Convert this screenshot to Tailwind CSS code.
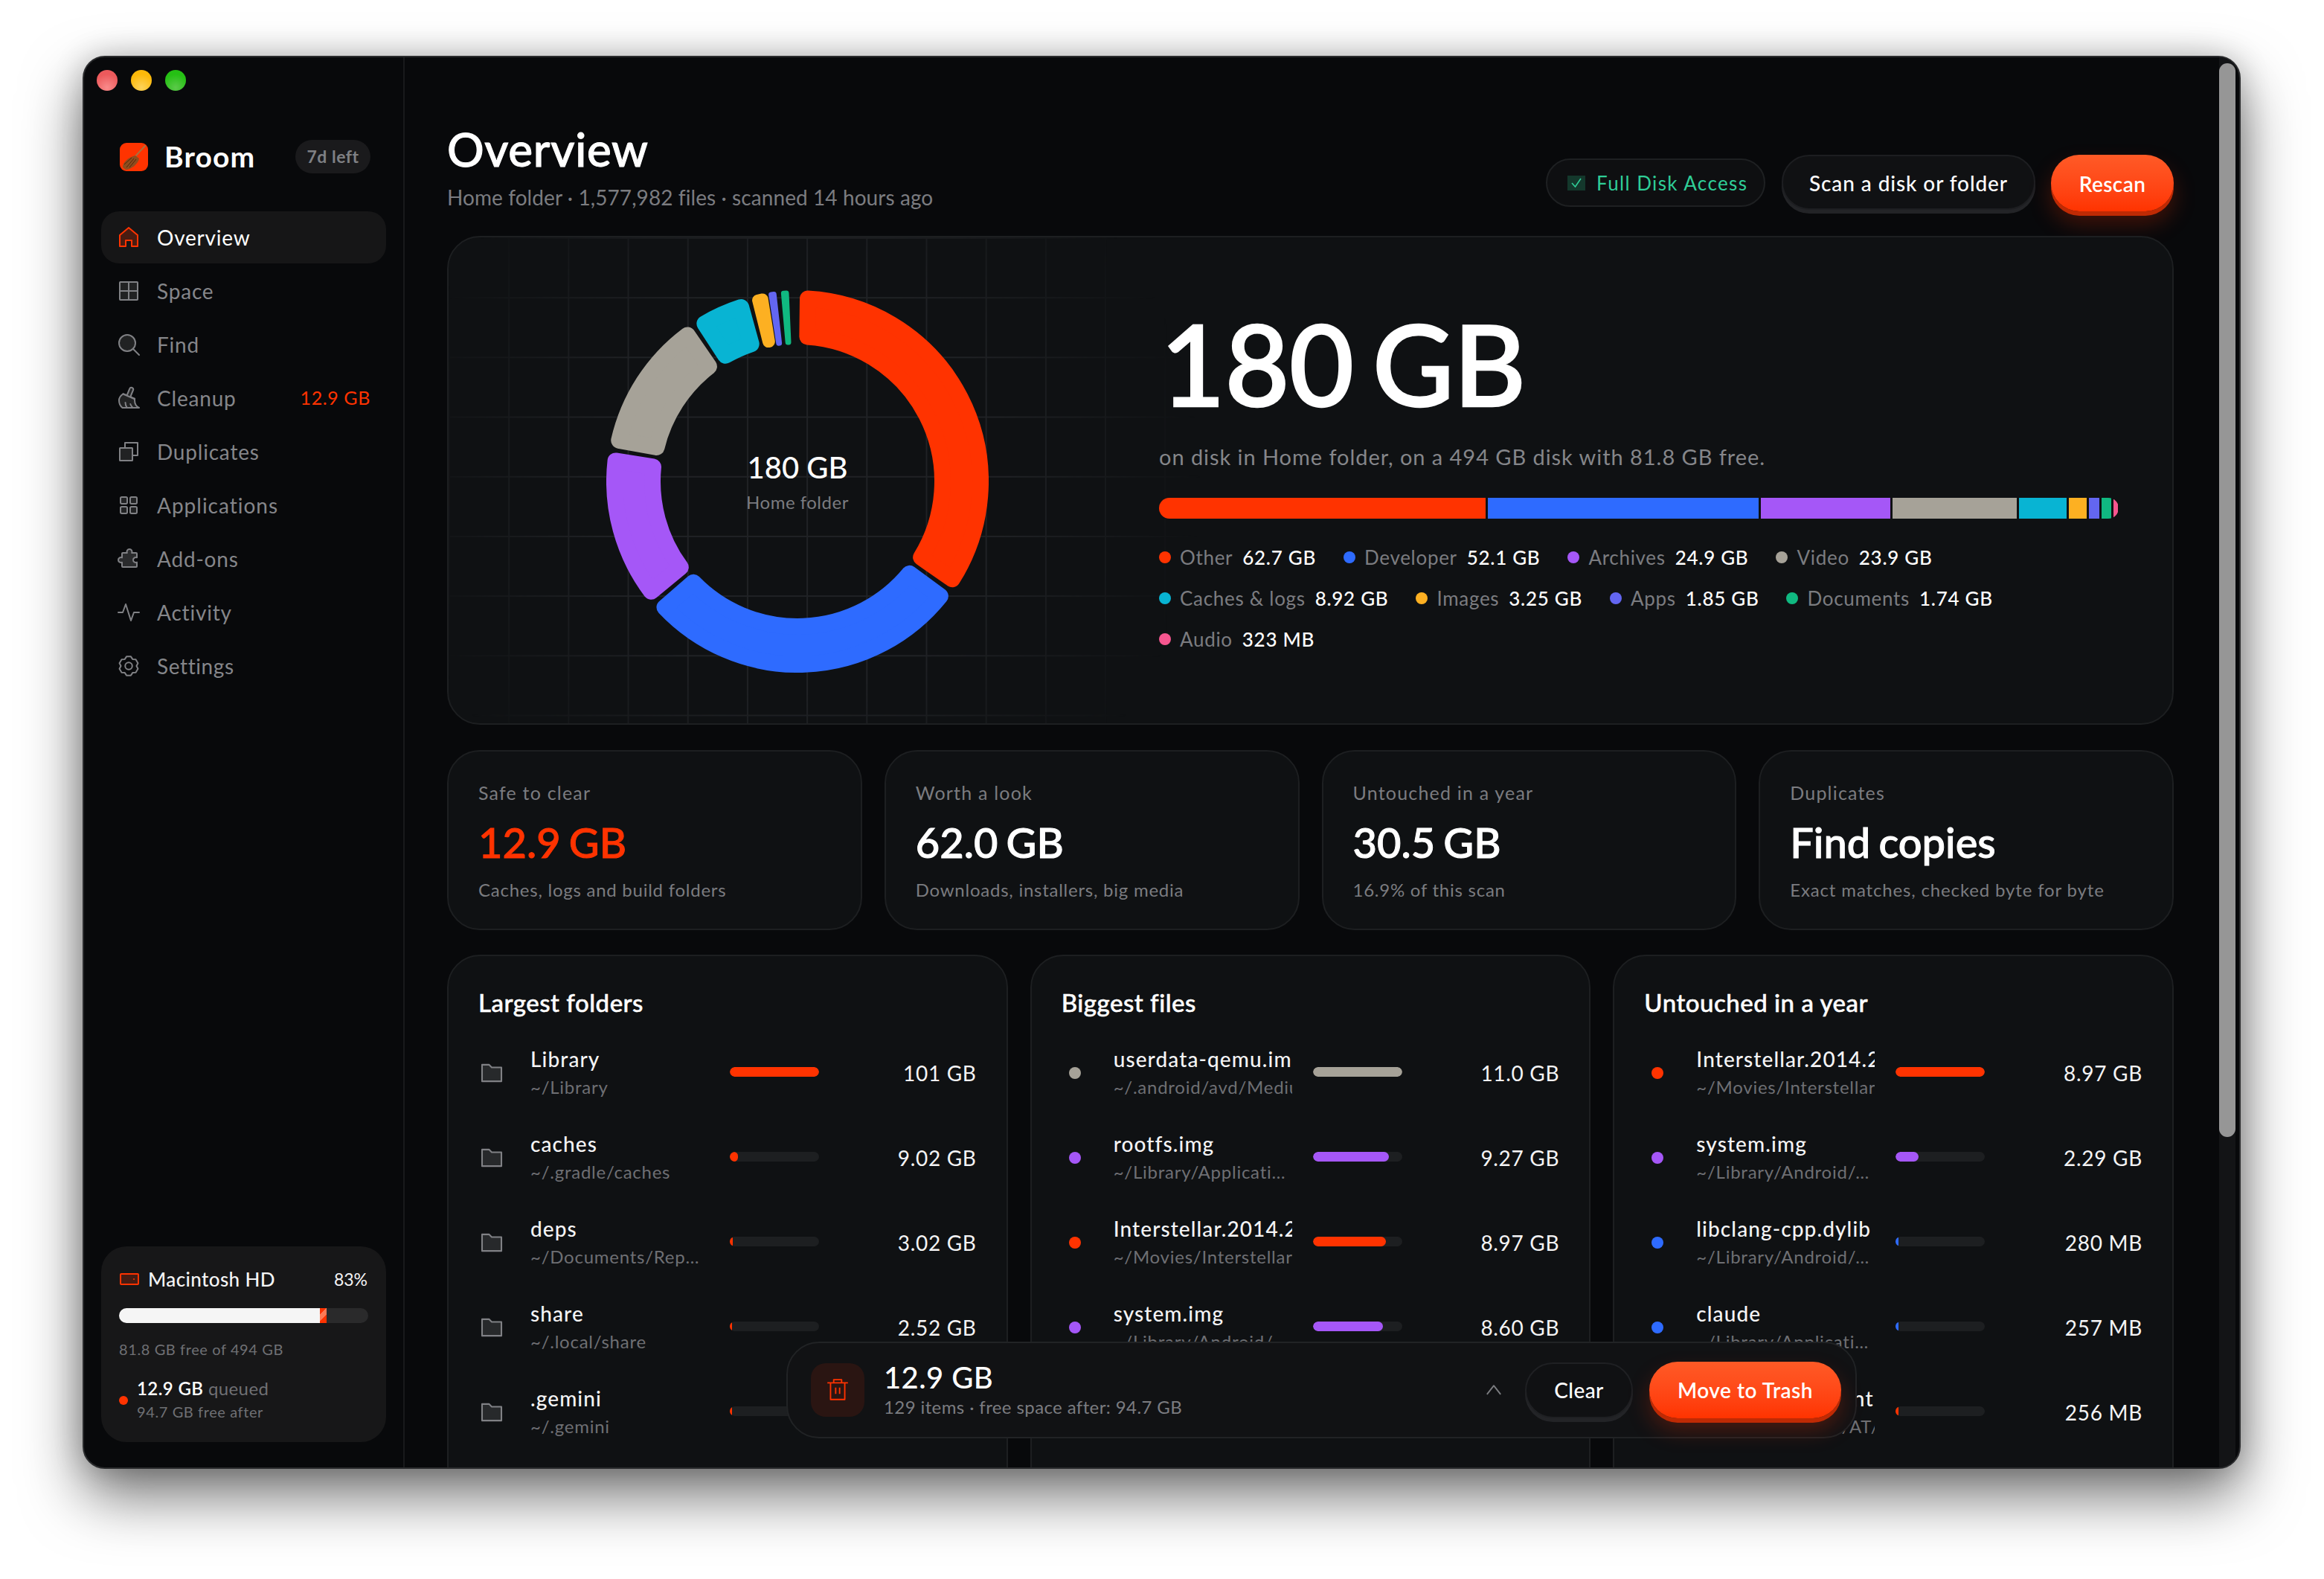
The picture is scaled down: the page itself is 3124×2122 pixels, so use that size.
<!DOCTYPE html>
<html lang="en">
<head>
  <meta charset="UTF-8" />
  <title>Broom - Overview</title>
  <script src="https://cdn.jsdelivr.net/npm/@tailwindcss/browser@4"></script>
</head>
<body class="bg-white w-[3124px] h-[2122px] pt-[75px] pl-[111px] overflow-hidden [font-family:Lato,sans-serif] text-[#f4f4f5]">
  <div class="relative flex w-[2901px] h-[1899px] rounded-[30px] overflow-hidden bg-[#08090b] border-2 border-[#2a2b2d] shadow-[0_36px_80px_rgba(0,0,0,0.55),0_0_40px_rgba(0,0,0,0.2)]">

    <!-- sidebar -->
    <aside class="w-[431px] shrink-0 h-full flex flex-col border-r-2 border-[#18191b] px-[23px]">
      <div class="flex gap-[18px] -ml-[6px] mt-[17px]">
        <span class="w-[28px] h-[28px] rounded-full bg-[radial-gradient(circle_at_50%_85%,#f98b8b,#ec5a5c_65%)]"></span>
        <span class="w-[28px] h-[28px] rounded-full bg-[radial-gradient(circle_at_50%_85%,#fdd35a,#fdb90a_65%)]"></span>
        <span class="w-[28px] h-[28px] rounded-full bg-[radial-gradient(circle_at_50%_85%,#5cc94a,#25c014_65%)]"></span>
      </div>
      <div class="flex items-center h-[45px] mt-[66px] pl-[25px] pr-[21px]">
        <svg class="w-[38px] h-[38px] rounded-[9px] bg-[#ff3300] shrink-0" viewBox="0 0 38 38">
          <path d="M34 4 L19 20" stroke="#a8703e" stroke-width="2" stroke-linecap="round" />
          <path d="M4 33 C3 27 12 19 21 17 L26 21 C25 28 15 36 8 36 Z" fill="#8f4d1e" />
          <path d="M9 33 L19 21 M13 33 L22 22 M6 29 L16 20" stroke="#4f270e" stroke-width="1" />
        </svg>
        <span class="ml-[22px] text-[39px] leading-none font-bold text-white tracking-[1.1px]">Broom</span>
        <span class="ml-auto h-[45px] w-[101px] rounded-full bg-[#1a1a1c] flex items-center justify-center text-[23px] font-bold text-[#7f8084] tracking-[0.5px]">7d left</span>
      </div>

      <nav class="mt-[51px] flex flex-col gap-[2px]">
        <a class="h-[70px] rounded-[24px] bg-[#161617] flex items-center pl-[21px] pr-[21px] gap-[22px] text-[28px] text-white tracking-[0.8px]">
          <svg class="w-[32px] h-[32px]" viewBox="0 0 256 256" fill="#ff3300" fill-opacity=".22" stroke="#ff3300" stroke-width="16" stroke-linejoin="round"><path d="M160 224V160H96V224H32V104L128 24L224 104V224Z" /></svg>
          Overview
        </a>
        <a class="h-[70px] rounded-[24px] flex items-center pl-[21px] pr-[21px] gap-[22px] text-[28px] text-[#85868a] tracking-[0.8px]">
          <svg class="w-[32px] h-[32px]" viewBox="0 0 256 256" fill="none" stroke="#808185" stroke-width="16"><rect x="32" y="32" width="192" height="192" rx="6" fill="#fff" fill-opacity=".1" /><path d="M128 32V224M32 128H224" /></svg>
          Space
        </a>
        <a class="h-[70px] rounded-[24px] flex items-center pl-[21px] pr-[21px] gap-[22px] text-[28px] text-[#85868a] tracking-[0.8px]">
          <svg class="w-[32px] h-[32px]" viewBox="0 0 256 256" fill="none" stroke="#808185" stroke-width="16" stroke-linecap="round"><circle cx="112" cy="112" r="88" fill="#fff" fill-opacity=".1" /><path d="M174 174L240 240" /></svg>
          Find
        </a>
        <a class="h-[70px] rounded-[24px] flex items-center pl-[21px] pr-[21px] gap-[22px] text-[28px] text-[#85868a] tracking-[0.8px]">
          <svg class="w-[32px] h-[32px]" viewBox="0 0 256 256" fill="none" stroke="#808185" stroke-width="16" stroke-linejoin="round" stroke-linecap="round"><path d="M240 232C206 216 192 186 192 152V134L158 120A14 14 0 0 1 151 102L176 42A20 20 0 0 0 138 28L114 86A14 14 0 0 1 96 93L68 82C38 104 24 126 24 152C24 184 36 212 60 232Z" fill="#fff" fill-opacity=".1" /><path d="M68 84L192 138M110 232C98 214 92 196 92 176M172 232C160 220 152 208 146 192" /></svg>
          Cleanup
          <span class="ml-auto text-[25px] text-[#ff3300] tracking-[0.6px]">12.9 GB</span>
        </a>
        <a class="h-[70px] rounded-[24px] flex items-center pl-[21px] pr-[21px] gap-[22px] text-[28px] text-[#85868a] tracking-[0.8px]">
          <svg class="w-[32px] h-[32px]" viewBox="0 0 256 256" fill="none" stroke="#808185" stroke-width="16" stroke-linejoin="round"><rect x="32" y="88" width="136" height="136" rx="4" fill="#fff" fill-opacity=".1" /><path d="M88 88V32H224V168H168" /></svg>
          Duplicates
        </a>
        <a class="h-[70px] rounded-[24px] flex items-center pl-[21px] pr-[21px] gap-[22px] text-[28px] text-[#85868a] tracking-[1px]">
          <svg class="w-[32px] h-[32px]" viewBox="0 0 256 256" fill="#fff" fill-opacity=".1" stroke="#808185" stroke-width="16"><rect x="40" y="40" width="72" height="72" rx="14" /><rect x="144" y="40" width="72" height="72" rx="14" /><rect x="40" y="144" width="72" height="72" rx="14" /><rect x="144" y="144" width="72" height="72" rx="14" /></svg>
          Applications
        </a>
        <a class="h-[70px] rounded-[24px] flex items-center pl-[21px] pr-[21px] gap-[22px] text-[28px] text-[#85868a] tracking-[0.8px]">
          <svg class="w-[32px] h-[32px]" viewBox="0 0 256 256" fill="#fff" fill-opacity=".14" stroke="#808185" stroke-width="16" stroke-linejoin="round"><path d="M64 216a8 8 0 0 1-8-8V165.3a28 28 0 1 1 0-50.6V72a8 8 0 0 1 8-8h46.7a28 28 0 1 1 50.6 0H208a8 8 0 0 1 8 8v42.7a28 28 0 1 0 0 50.6V208a8 8 0 0 1-8 8Z" /></svg>
          Add-ons
        </a>
        <a class="h-[70px] rounded-[24px] flex items-center pl-[21px] pr-[21px] gap-[22px] text-[28px] text-[#85868a] tracking-[0.8px]">
          <svg class="w-[32px] h-[32px]" viewBox="0 0 256 256" fill="none" stroke="#808185" stroke-width="16" stroke-linejoin="round" stroke-linecap="round"><path d="M16 128H64L96 40L152 216L184 128H240" /></svg>
          Activity
        </a>
        <a class="h-[70px] rounded-[24px] flex items-center pl-[21px] pr-[21px] gap-[22px] text-[28px] text-[#85868a] tracking-[0.6px]">
          <svg class="w-[32px] h-[32px]" viewBox="0 0 256 256" fill="none" stroke="#808185" stroke-width="16" stroke-linejoin="round"><path d="M104.6 26.7H151.4L170 55.3L204 57.1L227.5 97.6L212 128L227.5 158.4L204 198.9L170 200.7L151.4 229.3H104.6L86 200.7L52 198.9L28.5 158.4L44 128L28.5 97.6L52 57.1L86 55.3Z" /><circle cx="128" cy="128" r="38" /></svg>
          Settings
        </a>
      </nav>

      <div class="mt-auto mb-[34px] h-[263px] rounded-[34px] bg-[#171718] px-[24px] pt-[28px]">
        <div class="flex items-center h-[32px]">
          <svg class="w-[26px] h-[16px] ml-[1px]" viewBox="0 0 26 16" fill="#ff3300" fill-opacity=".2" stroke="#ff3300" stroke-width="2"><rect x="1" y="1" width="24" height="14" rx="1" /><circle cx="19" cy="8" r="1" fill="#ff3300" fill-opacity="1" stroke="none" /></svg>
          <span class="ml-[12px] text-[26px] font-medium tracking-[0.4px]">Macintosh HD</span>
          <span class="ml-auto text-[23px] mr-[1px]">83%</span>
        </div>
        <div class="mt-[23px] h-[20px] w-[335px] rounded-full bg-[#2a2a2b] overflow-hidden flex">
          <div class="w-[270px] bg-[#f5f5f5]"></div>
          <div class="w-[9px] bg-[linear-gradient(135deg,#ff3300_30%,#ff7a55_30%,#ff7a55_62%,#ff3300_62%)]"></div>
        </div>
        <div class="mt-[21px] text-[20px] leading-[28px] text-[#6f7074] tracking-[0.6px]">81.8 GB free of 494 GB</div>
        <div class="mt-[24px] flex items-start">
          <span class="w-[12px] h-[12px] rounded-full bg-[#ff3300] mt-[25px]"></span>
          <div class="ml-[12px]">
            <div class="text-[24px] leading-[30px] tracking-[0.4px]"><span class="font-semibold text-white">12.9 GB</span> <span class="text-[#6f7074]">queued</span></div>
            <div class="text-[20px] leading-[26px] mt-[3px] text-[#6f7074] tracking-[0.6px]">94.7 GB free after</div>
          </div>
        </div>
      </div>
    </aside>

    <!-- main -->
    <main class="relative flex-1 min-w-0 h-full overflow-hidden pl-[57px] pr-[88px] pt-[87px]">
      <header class="flex items-start justify-between h-[119px]">
        <div>
          <h1 class="text-[62px] leading-[72px] font-medium text-white tracking-[0.7px] [-webkit-text-stroke:1px_#fff]">Overview</h1>
          <p class="mt-[11px] text-[28px] leading-[36px] text-[#7b7c80] tracking-[0.08px]">Home folder · 1,577,982 files · scanned 14 hours ago</p>
        </div>
        <div class="flex items-start mt-[44px]">
          <div class="mt-[5px] h-[65px] w-[295px] rounded-full border-2 border-[#1e2022] bg-[#0e0f11] flex items-center pl-[27px] gap-[15px] text-[26px] text-[#2fce97] tracking-[1.4px]">
            <svg class="w-[24px] h-[20px] bg-[#14382c]" viewBox="0 0 24 20" fill="none" stroke="#2fce97" stroke-width="1.6"><path d="M6 10L10.5 15L18 4" /></svg>
            <span class="mt-[2px]">Full Disk Access</span>
          </div>
          <button class="ml-[22px] h-[74px] w-[341px] rounded-full border-2 border-[#1d1e21] bg-[#101113] text-[28px] font-medium text-white shadow-[0_5px_0_#232427] tracking-[0.9px] pt-[2px]">Scan a disk or folder</button>
          <button class="ml-[21px] h-[76px] w-[165px] rounded-full bg-linear-to-b from-[#ff5a26] to-[#ff3300] text-[28px] font-semibold text-white shadow-[0_6px_0_#bf2a04,0_16px_30px_rgba(255,51,0,0.25)] tracking-[0.4px] pt-[1px]">Rescan</button>
        </div>
      </header>

      <!-- hero -->
      <section class="relative mt-[34px] h-[657px] rounded-[44px] border-2 border-[#1d1f21] bg-[#0f1113] overflow-hidden flex items-start">
        <div class="absolute inset-0 bg-[linear-gradient(#202225_2px,transparent_2px),linear-gradient(90deg,#202225_2px,transparent_2px)] bg-[size:80.2px_80.2px] [mask-image:radial-gradient(circle_at_471px_330px,#000_15%,transparent_540px)]"></div>
        <div class="relative ml-[212px] mt-[71px] w-[514px] h-[514px] shrink-0">
          <svg id="donut" class="w-[514px] h-[514px]" viewBox="0 0 514 514"></svg>
          <div class="absolute inset-0 flex flex-col items-center justify-center">
            <div class="text-[40px] leading-[46px] font-medium text-white">180 GB</div>
            <div class="mt-[9px] text-[24px] leading-[30px] text-[#7b7c80] tracking-[0.5px]">Home folder</div>
          </div>
        </div>
        <div class="relative ml-[229px] mt-[97px] w-[1300px]">
          <div class="text-[150px] leading-[144px] font-medium text-white ml-[2px] tracking-[-0.5px] [word-spacing:-12px] [-webkit-text-stroke:2.5px_#fff]">180 GB</div>
          <p class="mt-[36px] text-[29px] leading-[36px] text-[#85868a] tracking-[0.95px]">on disk in Home folder, on a 494 GB disk with 81.8 GB free.</p>
          <div class="mt-[37px] flex gap-[3px] w-[1290px] h-[28px] rounded-full overflow-hidden">
            <div class="w-[439px] bg-[#ff3300]"></div>
            <div class="w-[364px] bg-[#2e6bff]"></div>
            <div class="w-[174px] bg-[#a557f7]"></div>
            <div class="w-[167px] bg-[#a6a298]"></div>
            <div class="w-[64px] bg-[#08b4d3]"></div>
            <div class="w-[24px] bg-[#fdb022]"></div>
            <div class="w-[14px] bg-[#6366f1]"></div>
            <div class="w-[13px] bg-[#10b981]"></div>
            <div class="w-[6px] bg-[#f6568f]"></div>
          </div>
          <div class="mt-[34px] flex flex-wrap w-[1290px] gap-x-[37px] gap-y-[19px] text-[26px] leading-[36px] tracking-[0.7px]">
            <div class="flex items-center"><span class="w-[16px] h-[16px] rounded-full bg-[#ff3300] mr-[12px]"></span><span class="text-[#7b7c80] mr-[13px]">Other</span><span class="text-white font-medium">62.7 GB</span></div>
            <div class="flex items-center"><span class="w-[16px] h-[16px] rounded-full bg-[#2e6bff] mr-[12px]"></span><span class="text-[#7b7c80] mr-[13px]">Developer</span><span class="text-white font-medium">52.1 GB</span></div>
            <div class="flex items-center"><span class="w-[16px] h-[16px] rounded-full bg-[#a557f7] mr-[12px]"></span><span class="text-[#7b7c80] mr-[13px]">Archives</span><span class="text-white font-medium">24.9 GB</span></div>
            <div class="flex items-center"><span class="w-[16px] h-[16px] rounded-full bg-[#a6a298] mr-[12px]"></span><span class="text-[#7b7c80] mr-[13px]">Video</span><span class="text-white font-medium">23.9 GB</span></div>
            <div class="flex items-center"><span class="w-[16px] h-[16px] rounded-full bg-[#08b4d3] mr-[12px]"></span><span class="text-[#7b7c80] mr-[13px]">Caches &amp; logs</span><span class="text-white font-medium">8.92 GB</span></div>
            <div class="flex items-center"><span class="w-[16px] h-[16px] rounded-full bg-[#fdb022] mr-[12px]"></span><span class="text-[#7b7c80] mr-[13px]">Images</span><span class="text-white font-medium">3.25 GB</span></div>
            <div class="flex items-center"><span class="w-[16px] h-[16px] rounded-full bg-[#6366f1] mr-[12px]"></span><span class="text-[#7b7c80] mr-[13px]">Apps</span><span class="text-white font-medium">1.85 GB</span></div>
            <div class="flex items-center"><span class="w-[16px] h-[16px] rounded-full bg-[#10b981] mr-[12px]"></span><span class="text-[#7b7c80] mr-[13px]">Documents</span><span class="text-white font-medium">1.74 GB</span></div>
            <div class="flex items-center"><span class="w-[16px] h-[16px] rounded-full bg-[#f6568f] mr-[12px]"></span><span class="text-[#7b7c80] mr-[13px]">Audio</span><span class="text-white font-medium">323 MB</span></div>
          </div>
        </div>
      </section>

      <!-- stat cards -->
      <section class="mt-[34px] grid grid-cols-4 gap-[30px]">
        <div class="h-[242px] rounded-[44px] border-2 border-[#1d1f21] bg-[#0f1113] pl-[40px] pt-[39px]">
          <div class="text-[25px] leading-[32px] text-[#7b7c80] tracking-[1.2px]">Safe to clear</div>
          <div class="mt-[19px] text-[56px] leading-[64px] font-medium text-[#ff3300] [word-spacing:-3px] [-webkit-text-stroke:1px_#ff3300]">12.9 GB</div>
          <div class="mt-[16px] text-[24px] leading-[32px] text-[#7b7c80] tracking-[0.75px]">Caches, logs and build folders</div>
        </div>
        <div class="h-[242px] rounded-[44px] border-2 border-[#1d1f21] bg-[#0f1113] pl-[40px] pt-[39px]">
          <div class="text-[25px] leading-[32px] text-[#7b7c80] tracking-[1.2px]">Worth a look</div>
          <div class="mt-[19px] text-[56px] leading-[64px] font-medium text-white [word-spacing:-3px] [-webkit-text-stroke:1px_#fff]">62.0 GB</div>
          <div class="mt-[16px] text-[24px] leading-[32px] text-[#7b7c80] tracking-[0.75px]">Downloads, installers, big media</div>
        </div>
        <div class="h-[242px] rounded-[44px] border-2 border-[#1d1f21] bg-[#0f1113] pl-[40px] pt-[39px]">
          <div class="text-[25px] leading-[32px] text-[#7b7c80] tracking-[1.2px]">Untouched in a year</div>
          <div class="mt-[19px] text-[56px] leading-[64px] font-medium text-white [word-spacing:-3px] [-webkit-text-stroke:1px_#fff]">30.5 GB</div>
          <div class="mt-[16px] text-[24px] leading-[32px] text-[#7b7c80] tracking-[0.75px]">16.9% of this scan</div>
        </div>
        <div class="h-[242px] rounded-[44px] border-2 border-[#1d1f21] bg-[#0f1113] pl-[40px] pt-[39px]">
          <div class="text-[25px] leading-[32px] text-[#7b7c80] tracking-[1.2px]">Duplicates</div>
          <div class="mt-[19px] text-[56px] leading-[64px] font-medium text-white [word-spacing:-3px] [-webkit-text-stroke:1px_#fff]">Find copies</div>
          <div class="mt-[16px] text-[24px] leading-[32px] text-[#7b7c80] tracking-[0.85px]">Exact matches, checked byte for byte</div>
        </div>
      </section>

      <!-- lists -->
      <section class="mt-[33px] grid grid-cols-3 gap-[30px]">
        <div class="h-[800px] shrink-0 rounded-[44px] border-2 border-[#1d1f21] bg-[#0f1113] px-[40px] pt-[44px]">
          <h2 class="text-[33px] leading-[36px] font-medium text-white tracking-[0.5px] [-webkit-text-stroke:0.5px_#fff]">Largest folders</h2>
          <div id="list-folders" class="mt-[20px]"></div>
        </div>
        <div class="h-[800px] shrink-0 rounded-[44px] border-2 border-[#1d1f21] bg-[#0f1113] px-[40px] pt-[44px]">
          <h2 class="text-[33px] leading-[36px] font-medium text-white tracking-[0.5px] [-webkit-text-stroke:0.5px_#fff]">Biggest files</h2>
          <div id="list-files" class="mt-[20px]"></div>
        </div>
        <div class="h-[800px] shrink-0 rounded-[44px] border-2 border-[#1d1f21] bg-[#0f1113] px-[40px] pt-[44px]">
          <h2 class="text-[33px] leading-[36px] font-medium text-white tracking-[0.5px] [-webkit-text-stroke:0.5px_#fff]">Untouched in a year</h2>
          <div id="list-untouched" class="mt-[20px]"></div>
        </div>
      </section>

      <!-- scrollbar -->
      <div class="absolute top-0 right-[5px] bottom-0 w-[22px] bg-[#131416]">
        <div class="mt-[8px] h-[1443px] rounded-full bg-[#969696]"></div>
      </div>

      <!-- selection toast -->
      <div class="absolute left-[513px] bottom-[39px] w-[1439px] h-[130px] rounded-[44px] border-2 border-[#212325] bg-[#111214] flex items-center pl-[31px] pr-[19px]">
        <div class="w-[72px] h-[72px] rounded-[20px] bg-[#2a1512] flex items-center justify-center">
          <svg class="w-[34px] h-[34px]" viewBox="0 0 256 256" fill="none" stroke="#ff3300" stroke-width="14" stroke-linejoin="round"><path d="M24 56H232M200 56V224H56V56M168 56V24H88V56M108 104V168M148 104V168" /></svg>
        </div>
        <div class="ml-[26px] -mt-[3px]">
          <div class="text-[40px] leading-[46px] font-medium text-white tracking-[0.4px]">12.9 GB</div>
          <div class="mt-[2px] text-[24px] leading-[30px] text-[#7b7c80] tracking-[0.4px]">129 items · free space after: 94.7 GB</div>
        </div>
        <svg class="ml-auto w-[24px] h-[24px]" viewBox="0 0 256 256" fill="none" stroke="#7b7c80" stroke-width="20" stroke-linejoin="round"><path d="M30 190L128 66L226 190" /></svg>
        <button class="ml-[30px] h-[75px] w-[145px] rounded-full border-2 border-[#1f2023] bg-[#101113] text-[28px] font-medium text-white shadow-[0_5px_0_#232427] tracking-[0.4px]">Clear</button>
        <button class="ml-[22px] h-[76px] w-[258px] rounded-full bg-linear-to-b from-[#ff5a26] to-[#ff3300] text-[28px] font-semibold text-white shadow-[0_6px_0_#bf2a04,0_16px_30px_rgba(255,51,0,0.25)] tracking-[0.5px]">Move to Trash</button>
      </div>
    </main>
  </div>

  <script>
    // donut: [start deg, end deg, colour], clockwise from 12 o'clock
    const segs = [
      [0.7, 124.8, "#ff3300"], [126.2, 229.1, "#2e6bff"], [230.5, 279, "#a557f7"], [280.4, 325.6, "#a6a298"],
      [327, 344.6, "#08b4d3"], [345.9, 350.9, "#fdb022"], [351.2, 353.6, "#6366f1"], [355, 357.4, "#10b981"]
    ];
    const OUTER = 257, INNER = 184;
    const pt = (deg, r) => {
      const a = deg * Math.PI / 180;
      return (257 + r * Math.sin(a)).toFixed(2) + " " + (257 - r * Math.cos(a)).toFixed(2);
    };
    const donut = document.getElementById("donut");
    segs.forEach(([a0, a1, color]) => {
      const inner = (a1 - a0) * Math.PI / 180 * INNER;
      const r = Math.min(11, inner / 2 - 0.3);
      const ro = OUTER - r, ri = INNER + r;
      const dO = r / ro * 180 / Math.PI, dI = r / ri * 180 / Math.PI;
      const large = a1 - a0 > 180 ? 1 : 0;
      const path = document.createElementNS("http://www.w3.org/2000/svg", "path");
      path.setAttribute("d", `M${pt(a0 + dO, ro)}A${ro} ${ro} 0 ${large} 1 ${pt(a1 - dO, ro)}L${pt(a1 - dI, ri)}A${ri} ${ri} 0 ${large} 0 ${pt(a0 + dI, ri)}Z`);
      path.setAttribute("fill", color);
      path.setAttribute("stroke", color);
      path.setAttribute("stroke-width", 2 * r);
      path.setAttribute("stroke-linejoin", "round");
      donut.appendChild(path);
    });

    const folderIcon = `<svg class="w-[30px] h-[26px] mx-auto" viewBox="0 0 256 224" fill="#fff" fill-opacity=".1" stroke="#808185" stroke-width="18" stroke-linejoin="round"><path d="M16 16H96L128 48H240V208H16Z" /></svg>`;
    const dot = cls => `<span class="block w-[16px] h-[16px] rounded-full mx-auto ${cls}"></span>`;

    // name, path, bar px, value, bar colour class, icon
    const lists = {
      "list-folders": [
        ["Library", "~/Library", 120, "101 GB", "bg-[#ff3300]"],
        ["caches", "~/.gradle/caches", 11, "9.02 GB", "bg-[#ff3300]"],
        ["deps", "~/Documents/Repositories", 4, "3.02 GB", "bg-[#ff3300]"],
        ["share", "~/.local/share", 3, "2.52 GB", "bg-[#ff3300]"],
        [".gemini", "~/.gemini", 3, "2.50 GB", "bg-[#ff3300]"]
      ],
      "list-files": [
        ["userdata-qemu.img", "~/.android/avd/Medium_Phone", 120, "11.0 GB", "bg-[#a6a298]", 1],
        ["rootfs.img", "~/Library/Applications/…", 102, "9.27 GB", "bg-[#a557f7]", 1],
        ["Interstellar.2014.2160p", "~/Movies/Interstellar (2014)", 98, "8.97 GB", "bg-[#ff3300]", 1],
        ["system.img", "~/Library/Android/sdk", 94, "8.60 GB", "bg-[#a557f7]", 1],
        ["android.img", "~/Library/Android/sdk", 90, "8.10 GB", "bg-[#a557f7]", 1]
      ],
      "list-untouched": [
        ["Interstellar.2014.2160p", "~/Movies/Interstellar (2014)", 120, "8.97 GB", "bg-[#ff3300]", 1],
        ["system.img", "~/Library/Android/sdk/system", 31, "2.29 GB", "bg-[#a557f7]", 1],
        ["libclang-cpp.dylib", "~/Library/Android/sdk/ndk", 4, "280 MB", "bg-[#2e6bff]", 1],
        ["claude", "~/Library/Application Support", 4, "257 MB", "bg-[#2e6bff]", 1],
        ["Discord_Assistant", "~/Library/Caches/AT/Cache", 4, "256 MB", "bg-[#ff3300]", 1]
      ]
    };

    Object.entries(lists).forEach(([id, rows]) => {
      document.getElementById(id).innerHTML = rows.map(([name, path, bar, value, color, isFile]) => {
        const clip = name.startsWith("userdata") || name.startsWith("Interstellar") || name.startsWith("Discord");
        return `<div class="flex items-center h-[114px]">
          <div class="w-[36px] mr-[34px] shrink-0">${isFile ? dot(color) : folderIcon}</div>
          <div class="w-[240px] mr-[28px] shrink-0">
            <div class="text-[28px] leading-[38px] font-medium text-[#f4f4f5] overflow-hidden whitespace-nowrap tracking-[1.1px]">${name}</div>
            <div class="text-[24px] leading-[38px] text-[#6e6f73] whitespace-nowrap overflow-hidden ${clip ? "" : "text-ellipsis"} tracking-[0.75px]">${path}</div>
          </div>
          <div class="w-[120px] h-[13px] rounded-full bg-[#1d1f21] overflow-hidden shrink-0 -mt-[4px]"><div class="h-full rounded-full ${color}" style="width:${bar}px"></div></div>
          <div class="ml-auto text-[28px] text-[#f4f4f5] tracking-[0.7px]">${value}</div>
        </div>`;
      }).join("");
    });
  </script>
</body>
</html>
